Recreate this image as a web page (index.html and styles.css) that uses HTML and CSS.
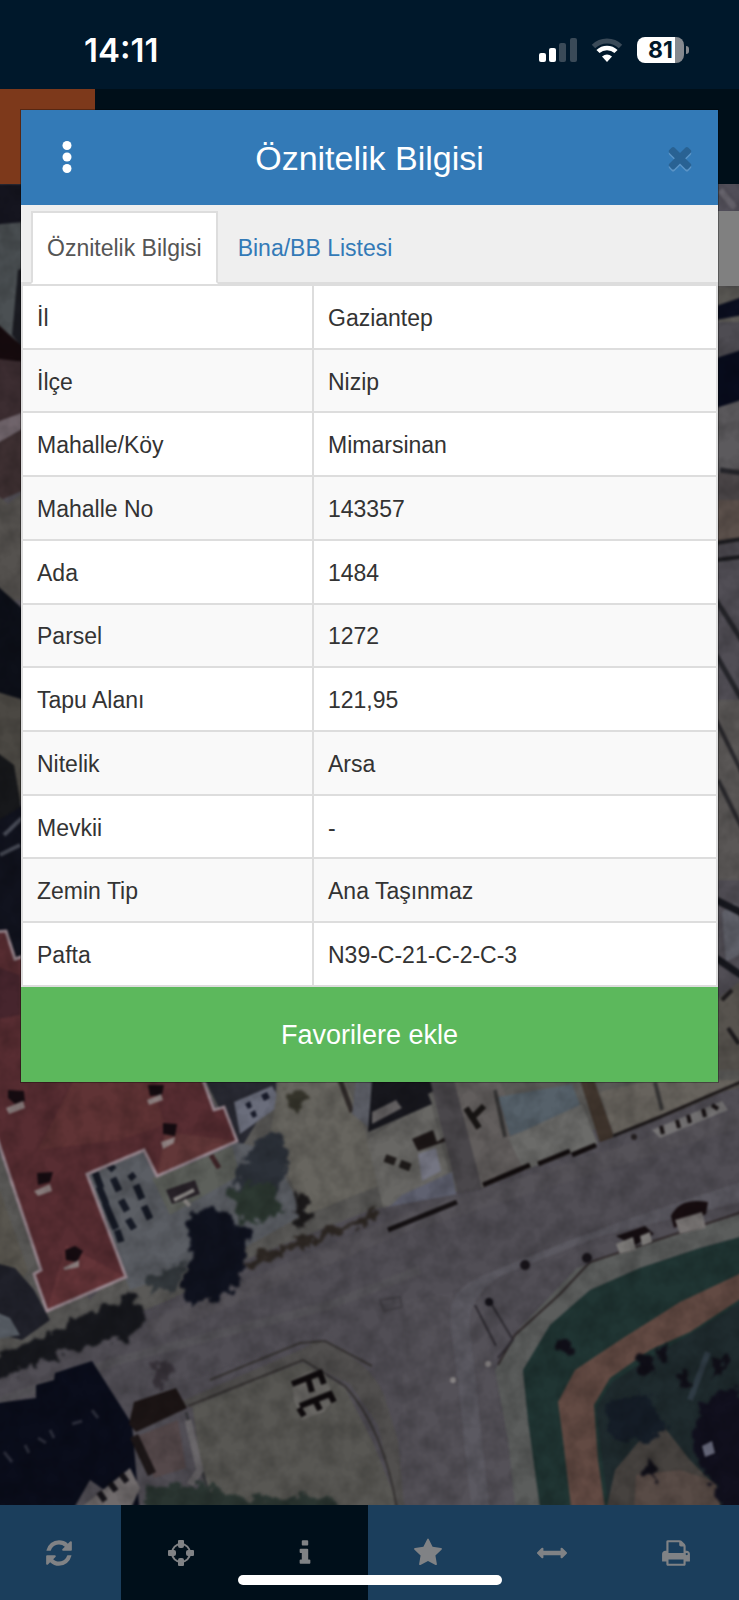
FILE: index.html
```html
<!DOCTYPE html>
<html lang="tr">
<head>
<meta charset="utf-8">
<meta name="viewport" content="width=device-width, initial-scale=1">
<title>Öznitelik Bilgisi</title>
<link rel="stylesheet" href="styles.css">
</head>
<body>
<div class="app">
  <div class="status-bar">
    <span class="clock">14:11</span>
    <div class="status-icons">
      <svg class="signal" viewBox="0 0 38 24" aria-hidden="true">
        <rect x="0" y="15" width="7" height="9" rx="2" fill="#fff"/>
        <rect x="10" y="10" width="7" height="14" rx="2" fill="#fff"/>
        <rect x="20" y="5" width="7" height="19" rx="2" fill="#3a4a58"/>
        <rect x="31" y="0" width="7" height="24" rx="2" fill="#3a4a58"/>
      </svg>
      <svg class="wifi" viewBox="0 0 32 24" aria-hidden="true">
        <path d="M2.500 8.500A19.500 19.500 0 0 1 29.500 8.500" fill="none" stroke="#3a4a58" stroke-width="5"/>
        <path d="M7 13.500A13 13 0 0 1 25 13.500" fill="none" stroke="#fff" stroke-width="4.500"/>
        <path d="M11 18.500Q16 14.500 21 18.500L16 24Z" fill="#fff"/>
      </svg>
      <div class="battery"><span class="battery-level">81</span></div>
    </div>
  </div>

  <div class="app-header"><div class="app-logo"></div></div>

  <main class="map">
    <svg class="map-picture" viewBox="0 184 739 1321" preserveAspectRatio="xMidYMid slice" aria-hidden="true">
      <defs>
        <filter id="soft" x="-5%" y="-5%" width="110%" height="110%" color-interpolation-filters="sRGB"><feGaussianBlur stdDeviation="1.200"/></filter>
        <filter id="leaf" x="-20%" y="-20%" width="140%" height="140%" color-interpolation-filters="sRGB">
          <feTurbulence type="fractalNoise" baseFrequency="0.09" numOctaves="3" seed="4" result="n"/>
          <feDisplacementMap in="SourceGraphic" in2="n" scale="22" xChannelSelector="R" yChannelSelector="G"/>
          <feGaussianBlur stdDeviation="1.800"/>
        </filter>
        <filter id="grain" x="0" y="0" width="100%" height="100%" color-interpolation-filters="sRGB">
          <feTurbulence type="fractalNoise" baseFrequency="0.05" numOctaves="3" seed="9"/>
          <feColorMatrix values="0 0 0 0 0  0 0 0 0 0  0 0 0 0 0  1.200 0 0 0 -0.400"/>
        </filter>
      </defs>
      <rect x="0" y="184" width="739" height="1321" fill="#514e55"/>

      <g filter="url(#soft)">
        <!-- left edge -->
        <path d="M-9 184H24V230H-9Z" fill="#15151f"/>
        <path d="M-9 225L24 222V350L-9 325Z" fill="#4b5053"/>
        <path d="M18 270L24 268V350L12 335Z" fill="#1b1c22"/>
        <path d="M-9 318L24 348V362L-9 360Z" fill="#160b0e"/>
        <path d="M-9 358L24 362V420L-9 436Z" fill="#3c2d31"/>
        <path d="M-9 424L24 412V430L-9 447Z" fill="#74686f"/>
        <path d="M-9 447L24 428V490L-9 504Z" fill="#3e3032"/>
        <path d="M-9 490L8 504L24 492V600H-9Z" fill="#55524f"/>
        <path d="M-9 580L24 610V700H-9Z" fill="#0d1019"/>
        <path d="M-9 690L24 700V800L-9 810Z" fill="#4b4843"/>
        <path d="M-9 748L14 765L20 800L24 830L-9 840Z" fill="#17181b"/>
        <path d="M-9 825L24 805V960H-9Z" fill="#11131e"/>
        <path d="M4 835L22 818M0 855L20 845" stroke="#464954" stroke-width="4"/>

        <!-- right edge -->
        <path d="M716 184H748V212H716Z" fill="#514e58"/>
        <path d="M720 190L735 208" stroke="#6a6770" stroke-width="6"/>
        <path d="M716 286H748V322H716Z" fill="#5d5b57"/>
        <path d="M716 306L748 295V314L716 320Z" fill="#0b0f20"/>
        <path d="M716 322H748V350L716 362Z" fill="#4e4c52"/>
        <path d="M716 358L748 348V400L716 408Z" fill="#080c1d"/>
        <path d="M716 408L748 398V468L716 474Z" fill="#5c5a5d"/>
        <path d="M716 474L748 466V500H716Z" fill="#4c4749"/>
        <path d="M716 500H748V540L716 545Z" fill="#5b504b"/>
        <path d="M716 543L748 538M716 560L748 556" stroke="#1d1d21" stroke-width="4"/>
        <path d="M716 600L748 650M716 655L748 710M720 470L748 474" stroke="#25252a" stroke-width="5"/>
        <path d="M716 700H748V880H716Z" fill="#5a5756"/>
        <path d="M716 720L748 785M718 780L748 840" stroke="#2a292d" stroke-width="4"/>
        <path d="M722 912L735 903L748 950L726 962Z" fill="#63646d"/>
        <path d="M716 958L748 980M716 900L748 916" stroke="#15161c" stroke-width="7"/>
        <path d="M716 1000L748 975V1090H716Z" fill="#57534e"/>
        <path d="M722 1000L732 990M728 1028L739 1044" stroke="#1d1b1d" stroke-width="4"/>

        <!-- yards under the dialog -->
        <path d="M195 1070H748V1082L560 1140L400 1220L250 1272L170 1300L-9 1370V1140L90 1300L236 1140Z" fill="#5a5957"/>
        <path d="M200 1070H276V1090L240 1150L208 1086Z" fill="#292a33"/>
        <path d="M234 1102L272 1086L282 1104L240 1134Z" fill="#6a6d7b"/>
        <path d="M245 1104l5-3 2 6-4 2zM261 1095l6-3 3 6-6 3zM250 1113l5-3 2 6-4 2z" fill="#181b29"/>
        <path d="M279 1080H344L360 1112L380 1185L306 1215L270 1135Z" fill="#67655f"/>
        <path d="M340 1080L352 1112" stroke="#302b2a" stroke-width="5"/>
        <path d="M356 1080H372V1130L352 1114Z" fill="#5b5d65"/>
        <path d="M367 1140L430 1100L457 1203L388 1229Z" fill="#686764"/>
        <path d="M402 1195L452 1172L458 1204L388 1229L384 1212Z" fill="#5f6170"/>
        <path d="M372 1080H455L428 1094L432 1104L368 1132Z" fill="#17171d"/>
        <path d="M372 1112L396 1100L402 1108L372 1124Z" fill="#625f60"/>
        <path d="M412 1139L433 1130L437 1142L460 1127L458 1137L418 1151Z" fill="#1d1717"/>
        <path d="M418 1154L436 1148L441 1171L422 1181Z" fill="#747582"/>
        <path d="M385 1158L412 1168" stroke="#211d1c" stroke-width="8" stroke-dasharray="11 5"/>
        <path d="M430 1080H454L484 1188L461 1206Z" fill="#4a474b"/>
        <path d="M454 1080H500L530 1165L482 1188Z" fill="#625e5d"/>
        <path d="M466 1108L479 1128M484 1106L472 1118" stroke="#191615" stroke-width="6"/>
        <path d="M498 1097L572 1084L582 1110L510 1136Z" fill="#56616a"/>
        <path d="M508 1138L582 1104L598 1145L524 1170Z" fill="#6b6b69"/>
        <path d="M580 1080L594 1080L615 1139L600 1143Z" fill="#41362e"/>
        <path d="M600 1092L650 1080H748L660 1119L614 1136Z" fill="#67635d"/>
        <path d="M495 1090L505 1137M655 1082L662 1110" stroke="#373636" stroke-width="4"/>
      </g>

      <g filter="url(#soft)">
        <!-- main road -->
        <path d="M-9 1376L130 1322L240 1262L370 1210L480 1190L748 1084V1230L560 1300L500 1515H360L330 1330L200 1375L-9 1420Z" fill="#514e55"/>
        <path d="M150 1330L400 1225L748 1116" fill="none" stroke="#59565c" stroke-width="18" opacity="0.5"/>
        <path d="M-9 1404L120 1360L330 1305L420 1270" fill="none" stroke="#5c595e" stroke-width="9" opacity="0.5"/>
        <path d="M405 1300L480 1288L520 1515H400Z" fill="#545158"/>
        <path d="M388 1230L457 1202" stroke="#151113" stroke-width="5"/>
        <path d="M483 1185L530 1165M538 1164L570 1151M572 1155L596 1145" stroke="#120d0e" stroke-width="5"/>
        <path d="M613 1136L660 1117L748 1079" fill="none" stroke="#1c1819" stroke-width="3"/>
        <path d="M652 1130L722 1101L728 1110L660 1138Z" fill="#757374"/>
        <path d="M661 1126l2 8M677 1120l2 8M688 1115l2 8M703 1109l2 8M712 1105l6 4" stroke="#171213" stroke-width="4"/>
        <circle cx="634" cy="1137" r="3" fill="#241f20"/>

        <!-- car park and yard by the red roof -->
        <path d="M87 1174L143 1151L157 1176L236 1142L270 1150L305 1214L240 1250L130 1290Z" fill="#5b5e64"/>
        <path d="M152 1178L232 1146L240 1175L170 1215Z" fill="#5d605b"/>
        <path d="M95 1172l6 16M99 1187l7 17M105 1203l7 17M110 1215l6 14M117 1230l4 12M113 1178l6 13M121 1200l6 11M128 1219l6 10M108 1164l6 6M136 1185l6 14M144 1206l6 13M130 1174l4 5" stroke="#161a25" stroke-width="7"/>
        <path d="M211 1155L219 1168" stroke="#3d2427" stroke-width="5"/>
        <path d="M166 1190L195 1180L200 1194L172 1204Z" fill="#272127"/>
        <path d="M174 1200l20-10M184 1200l6 6" stroke="#8c8886" stroke-width="4"/>
      </g>

      <g filter="url(#leaf)">
        <path d="M250 1145L280 1132L290 1160L280 1195L245 1215L232 1190Z" fill="#2c3139"/>
        <path d="M230 1190L272 1180L280 1215L242 1225Z" fill="#2d3932"/>
        <path d="M185 1218L212 1206L248 1230L246 1270L223 1298L188 1304L180 1288L193 1248Z" fill="#0f121e"/>
        <path d="M297 1193L309 1198L307 1226L292 1224Z" fill="#1a1819"/>
        <path d="M283 1092L308 1094L306 1110L290 1108Z" fill="#34332a"/>
        <path d="M244 1262L298 1240L353 1222L378 1208L374 1220L288 1252L248 1270Z" fill="#2e2824"/>
      </g>

      <g filter="url(#soft)">
        <!-- lower left plots -->
        <path d="M-9 1165L28 1270L10 1300L-9 1298Z" fill="#59564f"/>
        <path d="M-9 1262L15 1268L34 1290L50 1320L22 1340L-9 1332Z" fill="#20212a"/>
        <path d="M-9 1310L10 1318L20 1335L-9 1340Z" fill="#5a6068"/>
        <path d="M192 1405L303 1362L345 1388L372 1440L402 1515H208Z" fill="#585753"/>
        <path d="M180 1402L300 1350L318 1340Q370 1360 384 1395L398 1440L405 1515H398L378 1425L350 1384L303 1361L190 1408Z" fill="#514f4e"/>
        <path d="M188 1406L303 1360L345 1386Q385 1430 398 1515M210 1380L300 1343L325 1341L372 1366" fill="none" stroke="#353231" stroke-width="2"/>
        <path d="M186 1412L202 1470L210 1500" fill="none" stroke="#36363a" stroke-width="3"/>
        <path d="M188 1420L200 1470L190 1485" stroke="#6a676a" stroke-width="7" fill="none"/>

        <!-- red roof -->
        <path d="M-9 932L6 931L15 959L30 954L203 1080L214 1110L224 1107L237 1141L157 1176L144 1150L87 1174L126 1277L47 1311L34 1274L41 1270L-9 1120Z" fill="#582d32"/>
        <path d="M74 1080L38 1150L120 1140L165 1125L150 1080Z" fill="#603335"/>
        <path d="M126 1277L66 1245L47 1311Z" fill="#643438"/>
        <path d="M157 1176L165 1132L237 1141Z" fill="#623738"/>
        <path d="M-9 965L20 975V1015L-9 1020Z" fill="#46252d"/>
        <path d="M-9 932L6 931L15 959L30 954M203 1080L214 1110L224 1107L237 1141L157 1176L144 1150L87 1174L126 1277L47 1311L34 1274L41 1270L-9 1120" fill="none" stroke="#99878f" stroke-width="3"/>
        <path d="M8 1090l16 1 1 10-10 3-7-6zM148 1085h16l-2 10-12 1zM163 1123l14 1-2 12-12-2zM37 1173l16-1-3 10-12 3zM65 1250l10-4 8 5-6 11-11-2z" fill="#160c11"/>
        <path d="M6 1108l17-7 2 7-16 6zM147 1100l14-6 2 6-14 5zM161 1142l14-5-1 6-11 6zM34 1191l16-7 2 7-14 5zM63 1268l16-8v7l-14 3z" fill="#8f8181"/>

        <!-- navy roof -->
        <path d="M-9 1404L36 1398V1385L54 1380L55 1373L92 1361L132 1424L140 1515L90 1480L70 1515H-9Z" fill="#0a0d1b"/>
        <path d="M4 1452l8 10M25 1445l4 8M38 1438l8 5M50 1430l4 8M72 1424l10-3M92 1410l6 8" stroke="#2b2d3a" stroke-width="3"/>
        <path d="M72 1515L130 1468L140 1488L128 1515Z" fill="#706b6c"/>
        <path d="M99 1492l6 9M110 1483l6 8M121 1474l6 8" stroke="#151318" stroke-width="6"/>
        <path d="M129 1424L134 1402L176 1388L187 1408L136 1432Z" fill="#1c1515"/>
        <path d="M138 1436L178 1420L186 1468L154 1478Z" fill="#54484a"/>
        <path d="M134 1436L152 1474" stroke="#1d1718" stroke-width="9"/>

        <!-- parked cars -->
        <path d="M292 1380L312 1370L325 1374L334 1398L324 1412L302 1420L294 1400Z" fill="#686663"/>
        <path d="M292 1384L320 1373L324 1384M308 1378L312 1392M300 1406L330 1394L334 1402M314 1398L320 1410M299 1408L304 1416" fill="none" stroke="#0f0b0d" stroke-width="6"/>

        <!-- side street and pavement -->
        <path d="M748 1180L640 1215L570 1240L484 1275Q448 1290 450 1320L458 1380L472 1515H490L470 1330Q465 1300 500 1276L600 1236L748 1200Z" fill="#5b5961"/>
        <path d="M748 1212L690 1230L610 1256L577 1268L518 1330L495 1370L508 1440L516 1515H541L528 1420L523 1370L550 1325L590 1290L640 1268L700 1248L748 1235Z" fill="#5b5d5c"/>
        <path d="M748 1210L645 1244L590 1262L560 1294L515 1335L498 1365" fill="none" stroke="#30292a" stroke-width="2"/>
        <path d="M489 1300L513 1340L498 1358M475 1305L496 1346" fill="none" stroke="#2d2a30" stroke-width="2"/>

        <!-- park -->
        <path d="M748 1235L700 1248L640 1268L590 1290L550 1325L523 1370L528 1420L541 1515H748Z" fill="#203533"/>
        <path d="M748 1270L680 1302L620 1340L575 1370L558 1402L563 1440L572 1515H606L598 1460L594 1405L610 1378L650 1350L690 1332L748 1294Z" fill="#624a43"/>
        <path d="M748 1298L690 1334L650 1358L612 1382L596 1408L602 1460L610 1515H748Z" fill="#1f2b2e"/>
        <path d="M640 1440L665 1428L690 1460L720 1490V1515H605L615 1470Z" fill="#46423f"/>
        <path d="M636 1475L680 1470L716 1482L722 1515H634Z" fill="#584b46"/>
        <path d="M690 1400L708 1352" stroke="#303c45" stroke-width="6"/>
      </g>

      <g filter="url(#leaf)">
        <path d="M-6 1358L60 1328L133 1293L148 1318L128 1338L78 1348L-6 1382Z" fill="#17181d"/>
        <path d="M148 1276L186 1264L178 1286L150 1296Z" fill="#33383c"/>
        <path d="M150 1364L167 1359L173 1379L155 1389Z" fill="#38333a"/>
        <path d="M150 1486L200 1484L240 1498L330 1496L350 1515H140Z" fill="#2a3531"/>
        <path d="M700 1405L730 1388L755 1395V1515H724L709 1476L694 1456Z" fill="#11101e"/>
        <path d="M605 1405L645 1390L665 1425L645 1445L610 1435Z" fill="#151d27"/>
        <path d="M636 1357l12-6 6 12-8 14-10-4zM656 1347l12-4-2 18-6 2zM676 1374l10-4 2 16-8 4zM712 1354l14 4-6 12-6 14zM644 1459l12 2v18l-10-2zM558 1336l16 6-2 12-14-4z" fill="#100f18"/>
      </g>

      <g filter="url(#soft)">
        <path d="M671 1216Q680 1197 708 1202L706 1214L674 1228Z" fill="#180e11"/>
        <path d="M675 1220L702 1212L706 1228L680 1234Z" fill="#777372"/>
        <path d="M616 1236L645 1226L654 1234L634 1246Z" fill="#150e11"/>
        <path d="M616 1244L633 1237L636 1250L620 1254ZM640 1236L650 1232L652 1242L642 1246Z" fill="#7e7c7a"/>
        <circle cx="525" cy="1265" r="5" fill="#19151b"/>
        <circle cx="587" cy="1258" r="5" fill="#19151b"/>
        <circle cx="489" cy="1302" r="4" fill="#15131a"/>
        <circle cx="488" cy="1364" r="3" fill="#8b8787"/>
        <circle cx="453" cy="1380" r="3" fill="#8b8787"/>
        <path d="M380 1300l20-3 2 10-18 4z" fill="none" stroke="#444147" stroke-width="2"/>
        <path d="M702 1446l10-5 3 12-10 4z" fill="#6d6f82"/>
      </g>
      <rect x="0" y="184" width="739" height="1321" filter="url(#grain)" opacity="0.300"/>
    </svg>
    <div class="map-panel"></div>
  </main>

  <nav class="toolbar" aria-label="Harita araçları">
    <button class="tool" type="button" aria-label="Yenile">
      <svg class="tool-icon" viewBox="0 0 1792 1792"><path d="M1639 1056q0 5-1 7-64 268-268 434.500t-478 166.500q-146 0-282.500-55t-243.500-157l-129 129q-19 19-45 19t-45-19-19-45v-448q0-26 19-45t45-19h448q26 0 45 19t19 45-19 45l-137 137q71 66 161 102t187 36q134 0 250-65t186-179q11-17 53-117 8-23 30-23h192q13 0 22.500 9.500t9.500 22.500zm25-800v448q0 26-19 45t-45 19h-448q-26 0-45-19t-19-45 19-45l138-138q-148-137-349-137-134 0-250 65t-186 179q-11 17-53 117-8 23-30 23h-199q-13 0-22.500-9.500t-9.500-22.500v-7q65-268 270-434.500t480-166.500q146 0 284 55.500t245 156.500l130-129q19-19 45-19t45 19 19 45z"/></svg>
    </button>
    <button class="tool tool-active" type="button" aria-label="Konum">
      <svg class="tool-icon" viewBox="0 0 30 30"><circle cx="15" cy="15" r="9" fill="none" stroke="currentColor" stroke-width="2"/><path d="M13 2h4q1 0 1 1v5q0 2-2 2h-2q-2 0-2-2v-5q0-1 1-1zM14 20h2q2 0 2 2v5q0 1-1 1h-4q-1 0-1-1v-5q0-2 2-2zM3 12h5q2 0 2 2v2q0 2-2 2h-5q-1 0-1-1v-4q0-1 1-1zM22 12h5q1 0 1 1v4q0 1-1 1h-5q-2 0-2-2v-2q0-2 2-2z"/></svg>
    </button>
    <button class="tool tool-active" type="button" aria-label="Bilgi">
      <svg class="tool-icon" viewBox="0 0 1792 1792"><path d="M1216 1344v128q0 26-19 45t-45 19h-512q-26 0-45-19t-19-45v-128q0-26 19-45t45-19h64v-384h-64q-26 0-45-19t-19-45v-128q0-26 19-45t45-19h384q26 0 45 19t19 45v576h64q26 0 45 19t19 45zm-128-1152v192q0 26-19 45t-45 19h-256q-26 0-45-19t-19-45v-192q0-26 19-45t45-19h256q26 0 45 19t19 45z"/></svg>
    </button>
    <button class="tool" type="button" aria-label="Favoriler">
      <svg class="tool-icon" viewBox="0 0 1792 1792"><path d="M1728 647q0 22-26 48l-363 354 86 500q1 7 1 20 0 21-10.500 35.500t-30.500 14.500q-19 0-40-12l-449-236-449 236q-22 12-40 12-21 0-31.500-14.500t-10.500-35.500q0-6 2-20l86-500-364-354q-25-27-25-48 0-37 56-46l502-73 225-455q19-41 49-41t49 41l225 455 502 73q56 9 56 46z"/></svg>
    </button>
    <button class="tool" type="button" aria-label="Ölçüm">
      <svg class="tool-icon" viewBox="0 0 1792 1792"><path d="M1792 896q0 26-19 45l-256 256q-19 19-45 19t-45-19-19-45v-128h-1024v128q0 26-19 45t-45 19-45-19l-256-256q-19-19-19-45t19-45l256-256q19-19 45-19t45 19 19 45v128h1024v-128q0-26 19-45t45-19 45 19l256 256q19 19 19 45z"/></svg>
    </button>
    <button class="tool" type="button" aria-label="Yazdır">
      <svg class="tool-icon" viewBox="0 0 1792 1792"><path d="M448 1536h896v-256h-896v256zm0-640h896v-384h-160q-40 0-68-28t-28-68v-160h-640v640zm1152 64q0-26-19-45t-45-19-45 19-19 45 19 45 45 19 45-19 19-45zm128 0v416q0 13-9.500 22.500t-22.500 9.500h-224v160q0 40-28 68t-68 28h-960q-40 0-68-28t-28-68v-160h-224q-13 0-22.500-9.500t-9.500-22.500v-416q0-79 56.500-135.500t135.500-56.500h64v-544q0-40 28-68t68-28h672q40 0 88 20t76 48l152 152q28 28 48 76t20 88v256h64q79 0 135.500 56.500t56.500 135.500z"/></svg>
    </button>
    <span class="home-indicator"></span>
  </nav>

  <section class="dialog" role="dialog" aria-labelledby="dialog-title">
    <header class="dialog-header">
      <button class="menu-button" type="button" aria-label="Menü">
        <svg class="menu-icon" viewBox="0 0 10 32"><circle cx="5" cy="4.500" r="4.500"/><circle cx="5" cy="16" r="4.500"/><circle cx="5" cy="27.500" r="4.500"/></svg>
      </button>
      <h1 class="dialog-title" id="dialog-title">Öznitelik Bilgisi</h1>
      <button class="close-button" type="button" aria-label="Kapat">
        <svg class="close-icon" viewBox="0 0 1792 1792"><path d="M1490 1322q0 40-28 68l-136 136q-28 28-68 28t-68-28l-294-294-294 294q-28 28-68 28t-68-28l-136-136q-28-28-28-68t28-68l294-294-294-294q-28-28-28-68t28-68l136-136q28-28 68-28t68 28l294 294 294-294q28-28 68-28t68 28l136 136q28 28 28 68t-28 68l-294 294 294 294q28 28 28 68z"/></svg>
      </button>
    </header>
    <div class="tabs">
      <a class="tab tab-current" href="#oznitelik">Öznitelik Bilgisi</a>
      <a class="tab" href="#bina">Bina/BB Listesi</a>
    </div>
    <table class="attributes" id="oznitelik">
      <tbody>
        <tr><th scope="row">İl</th><td>Gaziantep</td></tr>
        <tr><th scope="row">İlçe</th><td>Nizip</td></tr>
        <tr><th scope="row">Mahalle/Köy</th><td>Mimarsinan</td></tr>
        <tr><th scope="row">Mahalle No</th><td>143357</td></tr>
        <tr><th scope="row">Ada</th><td>1484</td></tr>
        <tr><th scope="row">Parsel</th><td>1272</td></tr>
        <tr><th scope="row">Tapu Alanı</th><td>121,95</td></tr>
        <tr><th scope="row">Nitelik</th><td>Arsa</td></tr>
        <tr><th scope="row">Mevkii</th><td>-</td></tr>
        <tr><th scope="row">Zemin Tip</th><td>Ana Taşınmaz</td></tr>
        <tr><th scope="row">Pafta</th><td>N39-C-21-C-2-C-3</td></tr>
      </tbody>
    </table>
    <button class="favorite-button" type="button">Favorilere ekle</button>
  </section>
</div>
</body>
</html>
```
FILE: styles.css
```css
* {
  box-sizing: border-box;
}

body {
  margin: 0;
  background: #00182b;
  color: #333;
  font-family: "Liberation Sans", Arial, sans-serif;
  font-size: 23px;
  line-height: 32px;
}

button {
  margin: 0;
  padding: 0;
  border: 0;
  background: none;
  font: inherit;
}

svg {
  display: block;
  fill: currentColor;
}

.app {
  position: relative;
  display: flex;
  flex-direction: column;
  min-height: 100vh;
  overflow: hidden;
}

/* Phone status bar */
.status-bar {
  display: flex;
  align-items: center;
  justify-content: space-between;
  height: 89px;
  padding: 10px 50px 0 84px;
  background: #00182b;
}

.clock {
  color: #fff;
  font-family: Inter, sans-serif;
  font-size: 33px;
  font-weight: 600;
}

.status-icons {
  display: flex;
  align-items: center;
  gap: 14px;
}

.signal {
  width: 38px;
  height: 24px;
}

.wifi {
  width: 32px;
  height: 24px;
}

.battery {
  position: relative;
  width: 47px;
  height: 26px;
  margin-right: 5px;
  border-radius: 8px;
  background: linear-gradient(to right, #fff 81%, #85898f 81%);
  color: #00182b;
  text-align: center;
}

.battery::after {
  content: "";
  position: absolute;
  top: 9px;
  right: -5px;
  width: 3px;
  height: 8px;
  border-radius: 0 4px 4px 0;
  background: #85898f;
}

.battery-level {
  display: block;
  font-family: Inter, sans-serif;
  font-size: 23px;
  font-weight: 700;
  line-height: 26px;
}

/* Page behind the dialog */
.app-header {
  height: 95px;
  background: #000f19;
}

.app-logo {
  width: 95px;
  height: 100%;
  background: #7d391b;
}

.map {
  position: relative;
  flex: 1;
  background: #514e55;
}

.map-picture {
  position: absolute;
  inset: 0;
  width: 100%;
  height: 100%;
}

.map-panel {
  position: absolute;
  top: 27px;
  right: 0;
  width: 40px;
  height: 75px;
  background: #808080;
}

.toolbar {
  position: relative;
  display: grid;
  grid-template-columns: 121px repeat(5, 1fr);
  height: 95px;
  background: #1b3e5c;
}

.tool {
  display: flex;
  align-items: center;
  justify-content: center;
  padding-right: 3px;
  color: #808285;
}

.tool-active {
  background: #000f1a;
}

.tool-icon {
  width: 30px;
  height: 30px;
}

.home-indicator {
  position: absolute;
  bottom: 15px;
  left: 50%;
  width: 264px;
  height: 10px;
  margin-left: -132px;
  border-radius: 5px;
  background: #fff;
}

/* Dialog */
.dialog {
  position: absolute;
  top: 110px;
  right: 21px;
  left: 21px;
  background: #fff;
  box-shadow: 0 0 0 1px rgba(0, 0, 0, 0.3);
}

.dialog-header {
  display: grid;
  grid-template-columns: 92px 1fr 92px;
  align-items: center;
  height: 95px;
  background: #337ab7;
  color: #fff;
}

.dialog-title {
  margin: 0;
  font-size: 34px;
  font-weight: 400;
  line-height: 40px;
  text-align: center;
}

.menu-button,
.close-button {
  display: flex;
  align-items: center;
  justify-content: center;
  height: 95px;
  padding-bottom: 2px;
  color: #fff;
}

.menu-icon {
  width: 10px;
  height: 32px;
}

.close-button {
  justify-self: end;
  width: 76px;
  color: #296293;
}

.close-icon {
  width: 34px;
  height: 34px;
  filter: drop-shadow(0 2px 0 #5b94c6);
}

.tabs {
  display: flex;
  gap: 4px;
  height: 79px;
  padding: 6px 10px 0;
  border-bottom: 2px solid #ddd;
  background: #efefef;
}

.tab {
  height: 73px;
  padding: 19px 14px 0;
  border: 2px solid transparent;
  color: #337ab7;
  text-decoration: none;
}

.tab-current {
  border-color: #ddd;
  border-bottom-color: #fff;
  background: #fff;
  color: #555;
}

.attributes {
  width: 100%;
  height: 703px;
  border-collapse: collapse;
  table-layout: fixed;
}

.attributes th,
.attributes td {
  padding: 15px 14px 13px;
  border: 2px solid #ddd;
  font-weight: 400;
  text-align: left;
}

.attributes th {
  width: 291px;
}

.attributes tr:nth-child(even) {
  background: #f9f9f9;
}

.favorite-button {
  display: block;
  width: 100%;
  height: 95px;
  background: #5cb85c;
  color: #fff;
  font-size: 27px;
}
```
